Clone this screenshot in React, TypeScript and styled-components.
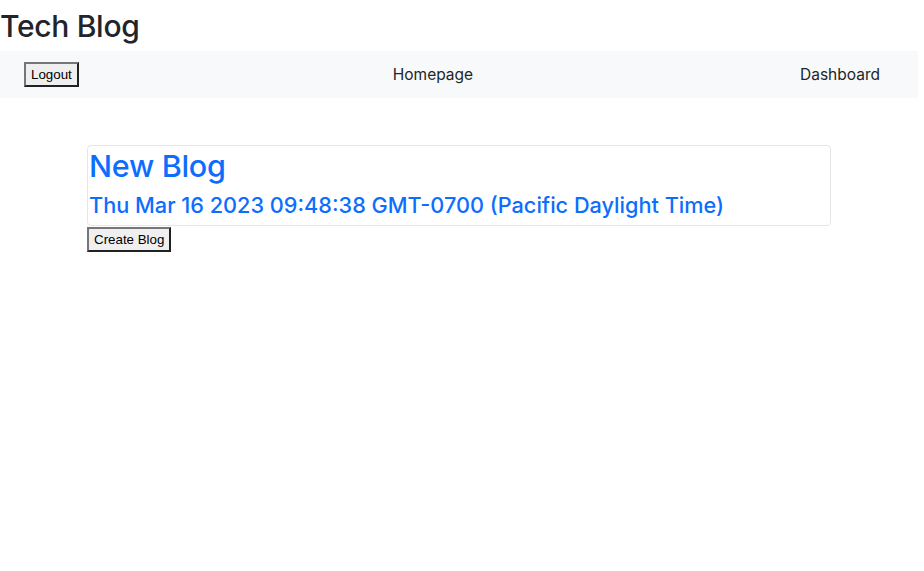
import React from 'react';
import styled, { createGlobalStyle } from 'styled-components';

const GlobalStyle = createGlobalStyle`
    body {
        margin: 0;
        background: #ffffff;
        color: #212529;
        font-family: Inter, 'Liberation Sans', Arial, sans-serif;
    }
`;

const Page = styled.div`
    width: 918px;
`;

const Title = styled.h1`
    margin: 8px 0 7px;
    font-size: 30px;
    font-weight: 500;
    line-height: 36px;
    letter-spacing: -0.3px;
`;

const NavBar = styled.nav`
    display: flex;
    align-items: center;
    justify-content: space-between;
    height: 47px;
    padding: 0 38px 0 24px;
    background-color: #f8f9fa;
`;

const NavLink = styled.a<{ $gap?: number }>`
    font-size: 15.5px;
    color: #212529;
    text-decoration: none;
    cursor: pointer;
    margin-right: ${(p) => p.$gap ?? 0}px;
`;

const PlainButton = styled.button`
    font-family: 'Liberation Sans', Arial, sans-serif;
    font-size: 13.33px;
    color: #000;
    background-color: #efefef;
    border: 2px outset #767676;
    padding: 2px 5px;
    line-height: 17px;
    cursor: pointer;
`;

const Main = styled.main`
    display: flex;
    flex-direction: column;
    align-items: flex-start;
    padding: 47px 0 0 87px;
`;

const Card = styled.div`
    width: 741px;
    border: 1px solid #e4e6e9;
    border-radius: 4px;
    padding: 0 0 0 1px;
    margin-bottom: 1px;
`;

const CardTitle = styled.h2`
    margin: 0;
    font-size: 30.5px;
    font-weight: 500;
    line-height: 39px;
    letter-spacing: -0.3px;
    color: #0d6efd;
`;

const CardDate = styled.h3`
    margin: 0;
    font-size: 21.7px;
    font-weight: 500;
    line-height: 40px;
    color: #0d6efd;
`;

const App = () => {
    return (
        <Page>
            <GlobalStyle />
            <Title>Tech Blog</Title>
            <NavBar>
                <PlainButton>Logout</PlainButton>
                <NavLink $gap={13}>Homepage</NavLink>
                <NavLink>Dashboard</NavLink>
            </NavBar>
            <Main>
                <Card>
                    <CardTitle>New Blog</CardTitle>
                    <CardDate>Thu Mar 16 2023 09:48:38 GMT-0700 (Pacific Daylight Time)</CardDate>
                </Card>
                <PlainButton>Create Blog</PlainButton>
            </Main>
        </Page>
    );
};

export default App;
